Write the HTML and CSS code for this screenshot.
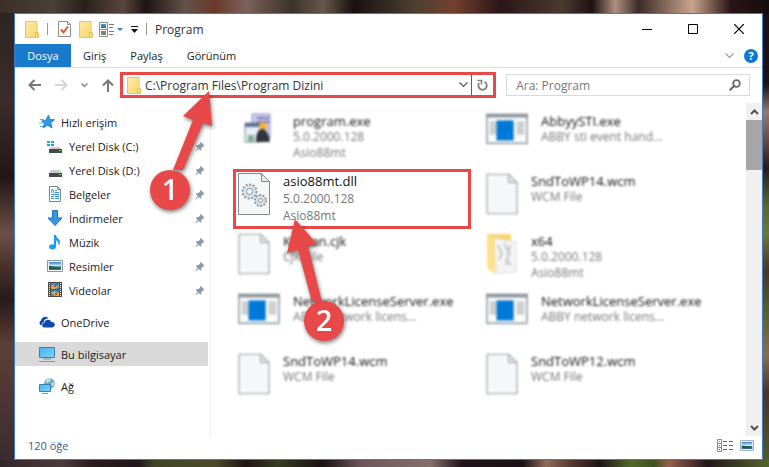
FILE: index.html
```html
<!DOCTYPE html>
<html lang="tr">
<head>
  <meta charset="UTF-8" />
  <title>Program</title>
  <meta name="viewport" content="width=device-width, initial-scale=1" />
  <link rel="stylesheet" href="styles.css">
</head>
<body>
  <!-- Shared icons -->
  <svg class="sprite" aria-hidden="true">
    <defs>
      <linearGradient id="gFolder" x1="0" y1="0" x2="1" y2="1">
        <stop offset="0" stop-color="#ffe9a6" /><stop offset="1" stop-color="#fbd66b" />
      </linearGradient>
      <linearGradient id="gScreen" x1="0" y1="0" x2="1" y2="1">
        <stop offset="0" stop-color="#3fb0f5" /><stop offset="1" stop-color="#7fd6ff" />
      </linearGradient>
      <linearGradient id="gSky" x1="0" y1="0" x2="0" y2="1">
        <stop offset="0" stop-color="#2f80d6" /><stop offset="0.5" stop-color="#d8f0fa" /><stop offset="0.6" stop-color="#2e6b62" /><stop offset="1" stop-color="#3778a8" />
      </linearGradient>
    </defs>
    <symbol id="folder" viewBox="0 0 14 17">
      <path d="M.5 .5h11.5v11.500h1.500v4.500H.5z" fill="url(#gFolder)" stroke="#e8c45c" />
      <path d="M10.500 16v-4.500h2.500V16" fill="#ffe9a6" stroke="#e3b941" />
    </symbol>
    <symbol id="pin" viewBox="0 0 12 12">
      <path d="M7 .5 11.500 5l-1 1-.7-.2-2.300 2.300.1 2-1 1L4.200 8.700.8 11.600l-.5-.4 3-3.500L1 5.300l1-1 2 .1L6.300 2.200 6 1.500z" fill="#8c9aa6" />
    </symbol>
    <symbol id="page" viewBox="0 0 34 44">
      <path d="M1 1h23l9 9v33H1z" fill="#f5f7f9" stroke="#9ba1a6" stroke-width="1.200" />
      <path d="M24 1v9h9z" fill="#dfe4e8" stroke="#9ba1a6" />
    </symbol>
    <symbol id="app" viewBox="0 0 44 32">
      <path d="M1 1h42v30H1z" fill="#fbfbfb" stroke="#a3adb3" stroke-width="2" />
      <path d="M0 0h44v4H0z" fill="#8d979d" />
      <path d="M4 8h7v14H4zM32 8h8v14h-8z" fill="#cfcfcf" />
      <path d="M11 7h18v21H11z" fill="#0078d7" />
    </symbol>
    <symbol id="picture" viewBox="0 0 16 12">
      <path d="M.5 .5h15v11H.5z" fill="#fff" stroke="#8b95a5" />
      <path d="M2 2h12v8H2z" fill="url(#gSky)" />
      <path d="M2 6c3 0 5 1 12 2.500V9H2z" fill="#29584d" />
    </symbol>
  </svg>

  <main class="window">
    <header class="title-bar">
      <svg class="ic-folder" width="14" height="17"><use href="#folder" /></svg>
      <span class="sep first"></span>
      <button class="quick" aria-label="Özellikler">
        <svg width="13" height="16" viewBox="0 0 13 16"><path d="M.5 .5h9l3 3v12H.5z" fill="#fff" stroke="#8a8f94" /><path d="M9.500 .5v3h3" fill="none" stroke="#8a8f94" /><path d="m3 8.500 2.500 3 4.500-6" fill="none" stroke="#e8541e" stroke-width="2" /></svg>
      </button>
      <button class="quick" aria-label="Yeni klasör">
        <svg width="14" height="17"><use href="#folder" /></svg>
      </button>
      <button class="quick layout" aria-label="Düzen">
        <svg width="24" height="15" viewBox="0 0 24 15"><path d="M.5 .5h8v14h-8zM.5 7.500h8" fill="#fff" stroke="#8a8f94" /><path d="M2 2h5v4H2z" fill="#3f8edb" /><path d="M2 4.500h5V6H2z" fill="#3c6b5b" /><path d="M2 9h5v4H2z" fill="#5b8fc9" /><path d="M2 9h3v2H2z" fill="#4da34d" /><path d="M4 11h2v2H4z" fill="#d4542c" /><path d="M10 2.500h5M10 5.500h4M10 9.500h5M10 12.500h4" stroke="#777" /><path d="M18 6h6l-3 3z" fill="#3f78b8" /></svg>
      </button>
      <button class="quick" aria-label="Özelleştir">
        <svg width="7" height="8" viewBox="0 0 7 8"><path d="M0 1.500h7" stroke="#111" /><path d="M0 4h7L3.500 8z" fill="#111" /></svg>
      </button>
      <span class="sep"></span>
      <h1>Program</h1>
      <div class="controls">
        <button aria-label="Simge durumuna küçült"><svg width="10" height="10"><path d="M0 5.500h10" stroke="#000" /></svg></button>
        <button aria-label="Ekranı kapla"><svg width="10" height="10"><path d="M.5 .5h9v9h-9z" fill="none" stroke="#000" /></svg></button>
        <button aria-label="Kapat"><svg width="10" height="10"><path d="m0 0 10 10M10 0 0 10" stroke="#000" stroke-width="1.200" /></svg></button>
      </div>
    </header>

    <nav class="tabs">
      <button class="tab active">Dosya</button>
      <button class="tab">Giriş</button>
      <button class="tab">Paylaş</button>
      <button class="tab">Görünüm</button>
      <div class="tab-tools">
        <button aria-label="Şeridi genişlet"><svg width="9" height="6"><path d="m.5 .5 4 4 4-4" fill="none" stroke="#9a9a9a" stroke-width="1.200" /></svg></button>
        <button class="help" aria-label="Yardım">?</button>
      </div>
    </nav>

    <div class="toolbar">
      <div class="nav-buttons">
        <button aria-label="Geri"><svg width="13" height="12"><path d="M13 6H1.500M6.500 1l-5 5 5 5" fill="none" stroke="#777" stroke-width="2" /></svg></button>
        <button aria-label="İleri"><svg width="13" height="12"><path d="M0 6h11.500M6.500 1l5 5-5 5" fill="none" stroke="#d6d6d6" stroke-width="2" /></svg></button>
        <button aria-label="Son konumlar"><svg width="7" height="5"><path d="m.5 .5 3 3 3-3" fill="none" stroke="#858585" stroke-width="1.500" /></svg></button>
        <button aria-label="Yukarı"><svg width="12" height="13"><path d="M6 13V1.500M1 6.500l5-5 5 5" fill="none" stroke="#777" stroke-width="2" /></svg></button>
      </div>
      <div class="address">
        <svg width="14" height="17"><use href="#folder" /></svg>
        <input type="text" id="path" aria-label="Adres" value="C:\Program Files\Program Dizini" />
        <button class="drop" aria-label="Önceki konumlar"><svg width="9" height="6"><path d="m.5 .5 4 4 4-4" fill="none" stroke="#555" stroke-width="1.200" /></svg></button>
        <button class="refresh" aria-label="Yenile"><svg width="11" height="12" viewBox="0 0 11 12"><path d="M7.500 2.800A4.200 4.200 0 1 1 2.200 4" fill="none" stroke="#808080" stroke-width="1.800" /><path d="M.5 1.500h4v4" fill="none" stroke="#808080" stroke-width="1.500" /></svg></button>
      </div>
      <div class="search">
        <input type="text" id="search" aria-label="Ara" placeholder="Ara: Program" />
        <svg width="12" height="12" viewBox="0 0 12 12"><circle cx="7.500" cy="4.500" r="3.300" fill="none" stroke="#666" stroke-width="1.800" /><path d="M5 7 .8 11.200" stroke="#666" stroke-width="2" /></svg>
      </div>
    </div>

    <div class="content">
      <aside class="sidebar">
        <a href="#" class="item root">
          <svg width="16" height="16" viewBox="0 0 16 16"><path d="m9.500 1 1.300 4.600 4.700.1-3.700 3 1.200 5.300-4.300-2.800L4 14l1.500-4.700L2.500 7l4-.6z" fill="#2f9ae8" stroke="#1476c4" stroke-width=".8" /><path d="M1 5.500h4M0 9h4M1 12.500h3" stroke="#58b4f0" /></svg>
          <span>Hızlı erişim</span>
        </a>
        <a href="#" class="item">
          <svg width="16" height="16" viewBox="0 0 16 16"><path d="M0 3h3v2H0zM4 3h3v2H4zM0 6h3v2H0zM4 6h3v2H4z" fill="#17a7f0" /><path d="M4 9h9l2 3H2z" fill="#c9cdd0" /><path d="M2 11h13v4H2z" fill="#44484b" /><path d="M12 12h2v1h-2z" fill="#6ee26e" /></svg>
          <span>Yerel Disk (C:)</span><svg class="pin" width="10" height="11"><use href="#pin" /></svg>
        </a>
        <a href="#" class="item">
          <svg width="16" height="16" viewBox="0 0 16 16"><path d="M4 8h9l2 3H2z" fill="#c9cdd0" /><path d="M2 11h13v4H2z" fill="#44484b" /><path d="M12 12h2v1h-2z" fill="#6ee26e" /></svg>
          <span>Yerel Disk (D:)</span><svg class="pin" width="10" height="11"><use href="#pin" /></svg>
        </a>
        <a href="#" class="item">
          <svg width="16" height="16" viewBox="0 0 16 16"><path d="M2.500 .5h8l3 3v12h-11z" fill="#fff" stroke="#7f858a" /><path d="M10.500 .5v3h3" fill="none" stroke="#7f858a" /><path d="m4 7 1.500-4L7 7M8 4.500h2M8 6.500h4M4 8.500h8M4 10.500h3M4 12.500h3M8 10.500h4M8 12.500h4" fill="none" stroke="#2f8fd8" /></svg>
          <span>Belgeler</span><svg class="pin" width="10" height="11"><use href="#pin" /></svg>
        </a>
        <a href="#" class="item">
          <svg width="16" height="16" viewBox="0 0 16 16"><path d="M5.500 .5h5v7.500h4.500L8 15.500 1 8h4.500z" fill="#3b94e0" stroke="#1f70b8" /></svg>
          <span>İndirmeler</span><svg class="pin" width="10" height="11"><use href="#pin" /></svg>
        </a>
        <a href="#" class="item">
          <svg width="16" height="16" viewBox="0 0 16 16"><ellipse cx="5.500" cy="12.800" rx="3.400" ry="2.600" fill="#1a9bf0" /><path d="M7 1h2c0 3 4 4 4 7 0 1.500-.5 2.500-1.500 3.500C12 8.500 10.500 7 9 6.500V13H7z" fill="#1a9bf0" /></svg>
          <span>Müzik</span><svg class="pin" width="10" height="11"><use href="#pin" /></svg>
        </a>
        <a href="#" class="item">
          <svg width="16" height="12"><use href="#picture" /></svg>
          <span>Resimler</span><svg class="pin" width="10" height="11"><use href="#pin" /></svg>
        </a>
        <a href="#" class="item">
          <svg width="16" height="16" viewBox="0 0 16 16"><path d="M1 0h14v15H1z" fill="#4b4b4b" /><path d="M4 1h8v6H4z" fill="#3d7fd0" /><path d="M4 8h8v6H4z" fill="#3d7fd0" /><path d="m4 4 3-2 2 3 3-2v2l-4 2H4zM4 11l4-2 2 2 2-1v4H8z" fill="#e0b030" /><path d="M7 3h2v2H7zM8 11h2v2H8z" fill="#d04030" /><path d="M2.500 1v14M13.500 1v14" stroke="#fff" stroke-dasharray="1 1" /></svg>
          <span>Videolar</span><svg class="pin" width="10" height="11"><use href="#pin" /></svg>
        </a>
        <a href="#" class="item root group">
          <svg width="16" height="12" viewBox="0 0 16 12"><path d="M2.500 9.500A2.600 2.600 0 0 1 2 4.600 4.200 4.200 0 0 1 9.500 2.500c-3 0-4.500 1.500-4.500 3.500-1.500.5-2.500 1.500-2.500 3.500z" fill="#0f4bac" /><path d="M5 11.500a2.500 2.500 0 0 1 .5-4.900A3.600 3.600 0 0 1 12.400 6a2.800 2.800 0 0 1 1.100 5.500z" fill="#0f4bac" /></svg>
          <span>OneDrive</span>
        </a>
        <a href="#" class="item root group selected">
          <svg width="16" height="16" viewBox="0 0 16 16"><path d="M.5 1.500h15v10H.5z" fill="url(#gScreen)" stroke="#3c7fa8" /><path d="M4 13h8" stroke="#7d98a8" /><path d="M0 15.500h16" stroke="#6d9dbb" /></svg>
          <span>Bu bilgisayar</span>
        </a>
        <a href="#" class="item root group">
          <svg width="16" height="16" viewBox="0 0 16 16"><circle cx="10.500" cy="5.500" r="5.300" fill="#5fa9c4" /><path d="M7 2c2-2 5-1 5 0s-1 2-2 2-1 2-3 1zM12 5l3-1c.5 2 0 4-2 5z" fill="#b9dbe0" /><path d="M.5 6.500h11v7H.5z" fill="url(#gScreen)" stroke="#3c7fa8" /><path d="M3 15.500h6" stroke="#7d98a8" /></svg>
          <span>Ağ</span>
        </a>
      </aside>

      <ul class="files">
        <li class="tile blurred">
          <svg width="42" height="32" viewBox="0 0 42 32"><path d="M14 1h18v24H14z" fill="#c9c8ec" stroke="#8e90c8" /><path d="M19 5h12M19 9h12" stroke="#7779b8" stroke-width="2" /><path d="M7 10h16v19H7z" fill="#e8eef4" stroke="#7d8794" /><path d="M7 10h16v4H7z" fill="#5d7296" /><circle cx="25" cy="13" r="4" fill="#f0b43c" /><path d="M18 29c0-10 3-13 6-13s7 4 8 13z" fill="#30343c" /><path d="M10 22h6v7h-6z" fill="#7eaf9a" /></svg>
          <div class="info"><h2>program.exe</h2><p>5.0.2000.128</p><p>Asio88mt</p></div>
        </li>
        <li class="tile blurred">
          <svg width="42" height="32"><use href="#app" /></svg>
          <div class="info"><h2>AbbyySTI.exe</h2><p>ABBY sti event hand...</p></div>
        </li>
        <li class="tile marked">
          <svg width="32" height="42" viewBox="0 0 32 42">
            <path d="M.5 .5h23l8 8v33H.5z" fill="#f5f7f9" stroke="#85898c" />
            <path d="M23.500 .5v8h8z" fill="#e6eaed" stroke="#85898c" />
            <g fill="#d7e0e7" stroke="#8b9aa5">
              <circle cx="11.500" cy="18.500" r="7" stroke-width="2" stroke-dasharray="2 1.600" />
              <circle cx="11.500" cy="18.500" r="6" stroke="none" />
              <circle cx="11.500" cy="18.500" r="3" fill="#f5f7f9" />
              <circle cx="22.500" cy="27.500" r="5.500" stroke-width="2" stroke-dasharray="2 1.400" />
              <circle cx="22.500" cy="27.500" r="4.600" stroke="none" />
              <circle cx="22.500" cy="27.500" r="2" fill="#f5f7f9" />
            </g>
          </svg>
          <div class="info"><h2>asio88mt.dll</h2><p>5.0.2000.128</p><p>Asio88mt</p></div>
        </li>
        <li class="tile blurred">
          <svg width="32" height="42"><use href="#page" /></svg>
          <div class="info"><h2>SndToWP14.wcm</h2><p>WCM File</p></div>
        </li>
        <li class="tile blurred">
          <svg width="32" height="42"><use href="#page" /></svg>
          <div class="info"><h2>Korean.cjk</h2><p>CJK File</p></div>
        </li>
        <li class="tile blurred">
          <svg width="32" height="42" viewBox="0 0 32 42"><path d="M1 1h24v34H1z" fill="#fbd66b" /><path d="m8 5 22 4v30l-20 2z" fill="#f4f4f2" stroke="#ddd" /><path d="m12 12 4 9-3 6M18 10l6 12M20 26l5 6M24 12l-4 20" fill="none" stroke="#c4cacc" stroke-width="2" /><path d="m1 1 8 6v34l-8-6z" fill="#ffe08a" /></svg>
          <div class="info"><h2>x64</h2><p>5.0.2000.128</p><p>Asio88mt</p></div>
        </li>
        <li class="tile blurred">
          <svg width="42" height="32"><use href="#app" /></svg>
          <div class="info"><h2>NetworkLicenseServer.exe</h2><p>ABBY network licens...</p></div>
        </li>
        <li class="tile blurred">
          <svg width="42" height="32"><use href="#app" /></svg>
          <div class="info"><h2>NetworkLicenseServer.exe</h2><p>ABBY network licens...</p></div>
        </li>
        <li class="tile blurred">
          <svg width="32" height="42"><use href="#page" /></svg>
          <div class="info"><h2>SndToWP14.wcm</h2><p>WCM File</p></div>
        </li>
        <li class="tile blurred">
          <svg width="32" height="42"><use href="#page" /></svg>
          <div class="info"><h2>SndToWP12.wcm</h2><p>WCM File</p></div>
        </li>
      </ul>

      <div class="scrollbar">
        <button aria-label="Yukarı kaydır"><svg width="9" height="6"><path d="m1 5 3.500-3.500L8 5" fill="none" stroke="#505050" stroke-width="2" /></svg></button>
        <div class="thumb"></div>
        <button class="down" aria-label="Aşağı kaydır"><svg width="9" height="6"><path d="m1 1 3.500 3.500L8 1" fill="none" stroke="#505050" stroke-width="2" /></svg></button>
      </div>
    </div>

    <footer class="status">
      <span>120 öğe</span>
      <div class="views">
        <button aria-label="Ayrıntılar"><svg width="16" height="13"><path d="M.5 .5h4v12h-4zM.5 4.500h4M.5 8.500h4" fill="#fff" stroke="#8a8a8a" /><path d="M2 2h1v1H2z" fill="#3a8" /><path d="M2 6h1v1H2z" fill="#36c" /><path d="M2 10h1v1H2z" fill="#d03" /><path d="M6 2.500h10M6 6.500h10M6 10.500h10" stroke="#666" stroke-dasharray="4 2" /></svg></button>
        <button aria-label="Büyük simgeler"><svg width="14" height="11"><use href="#picture" /></svg></button>
      </div>
    </footer>
  </main>

  <!-- Step markers lying over the window -->
  <svg class="marker one" width="64" height="124" viewBox="0 0 64 124">
    <path d="M60 2 34 27l10 4-20 50h10L54 34l9 3z" />
    <circle cx="21" cy="101" r="20" />
    <text x="21" y="111">1</text>
  </svg>
  <svg class="marker two" width="60" height="126" viewBox="0 0 60 126">
    <path d="M10 2 2 36l11-3 14 52h10L23 29l9-2z" />
    <circle cx="39" cy="104" r="20" />
    <text x="39" y="114">2</text>
  </svg>
</body>
</html>
```

FILE: styles.css
```css
:root {
  --frame: #3f7bc8;
  --accent: #1979ca;
  --mark: #e84848;
  --line: #dadbdc;
  --text: #1a1a1a;
  --muted: #777;
}

* { box-sizing: border-box; }

body {
  position: relative;
  display: flex;
  min-height: 100vh;
  margin: 0;
  padding: 13px 6px 7px 14px;
  font-family: "Open Sans", "Noto Sans", sans-serif;
  font-size: 11px;
  color: var(--text);
  background:
    linear-gradient(90deg, #3c3028 0, #4a4038 7%, #2a1f1c 11%, #5a463d 16%, #1d1414 19%, #62514a 24%, #6a3a2c 28%, #7a625a 32%, #3b3228 38%, #66594a 42%, #1a1010 46%, #4c4030 54%, #74402f 59%, #2a1618 65%, #4a3a30 73%, #1e1212 77%, #b09080 80%, #3a2b28 83%, #c9a48c 90%, #2a1518 95%, #150c0c 100%) top / 100% 13px no-repeat,
    linear-gradient(90deg, #33262a 0, #4a3a3c 8%, #2a1c1e 12%, #20161a 18%, #3f4426 20%, #4a4a2a 28%, #201414 32%, #363c22 36%, #1c1214 42%, #6c565a 47%, #86706c 56%, #20141a 60%, #1c1214 68%, #8c6c5c 71%, #5c3c34 74%, #1c1416 78%, #52682a 82%, #3f5020 85%, #94604c 87%, #22161a 92%, #54642c 100%) bottom / 100% 7px no-repeat,
    linear-gradient(180deg, #1a0f10 0, #1c1012 18%, #9a7868 24%, #6c4a44 30%, #2a1a1a 36%, #55682c 44%, #6c7838 50%, #4a3426 58%, #54602c 66%, #8c6c50 76%, #4a3428 84%, #525c2c 100%) right / 6px 100% no-repeat,
    linear-gradient(180deg, #2c2420 0, #3c2c28 22%, #221614 38%, #6c5048 50%, #4c362e 56%, #281a18 64%, #5c4038 74%, #382a2c 100%);
}

button {
  display: flex;
  align-items: center;
  justify-content: center;
  padding: 0;
  border: 0;
  background: none;
  color: inherit;
  font: inherit;
}

h1, h2, p, ul {
  margin: 0;
  padding: 0;
  font-weight: normal;
}

svg { flex: none; }

.sprite {
  position: absolute;
  width: 0;
  height: 0;
}

.window {
  flex: 1;
  display: flex;
  flex-direction: column;
  border: 1px solid var(--frame);
  background: #fff;
}

/* Title bar */
.title-bar {
  display: flex;
  align-items: center;
  gap: 8px;
  height: 30px;
  padding-left: 10px;
}

.title-bar h1 {
  flex: 1;
  font-size: 12px;
  color: #333;
}

.sep {
  width: 1px;
  height: 12px;
  background: #999;
}

.sep.first { margin-right: 2px; }

.quick.layout { margin-left: -2px; }

.controls {
  display: flex;
  align-self: stretch;
}

.controls button { width: 46px; }

/* Ribbon tabs */
.tabs {
  display: flex;
  height: 24px;
  border-bottom: 1px solid var(--line);
}

.tab {
  padding: 0 12px;
  white-space: nowrap;
}

.tab.active {
  width: 56px;
  background: var(--accent);
  color: #fff;
}

.tab-tools {
  display: flex;
  align-items: center;
  gap: 10px;
  margin-left: auto;
  padding-right: 4px;
}

.help {
  width: 14px;
  height: 14px;
  border-radius: 50%;
  background: #0c78d6;
  color: #fff;
  font-weight: bold;
}

/* Navigation and address */
.toolbar {
  display: flex;
  align-items: flex-start;
  gap: 10px;
  padding: 4px 12px 5px 0;
}

.nav-buttons {
  display: flex;
  align-items: center;
  justify-content: space-between;
  width: 105px;
  height: 26px;
  margin-right: -10px;
  padding: 0 6px 0 13px;
}

.address {
  flex: 8;
  display: flex;
  align-items: center;
  height: 26px;
  padding-left: 4px;
  border: 3px solid var(--mark);
}

.toolbar input {
  flex: 1;
  min-width: 0;
  padding: 0 4px;
  border: 0;
  outline: 0;
  background: none;
  font-family: inherit;
  font-size: 12px;
  color: #333;
}

.drop {
  width: 17px;
  height: 20px;
  border-right: 1px solid #0078d7;
}

.refresh { width: 21px; }

.search {
  flex: 5;
  display: flex;
  align-items: center;
  height: 22px;
  margin-top: 2px;
  padding: 0 8px 0 5px;
  border: 1px solid #d9d9d9;
}

.search input::placeholder {
  color: #777;
  opacity: 1;
}

/* Sidebar */
.content {
  flex: 1;
  display: flex;
}

.sidebar {
  width: 196px;
  padding: 7px 2px 0 0;
  border-right: 1px solid #f0f0f0;
}

.item {
  display: flex;
  align-items: center;
  gap: 6px;
  height: 24px;
  padding: 0 3px 0 32px;
  color: var(--text);
  text-decoration: none;
}

.item.root { padding-left: 24px; }
.item.group { margin-top: 8px; }
.item.selected { background: #d9d9d9; }

.pin { margin-left: auto; }

/* File tiles */
.files {
  flex: 1;
  display: grid;
  grid-template-columns: 1fr 1fr;
  grid-auto-rows: 60px;
  column-gap: 10px;
  padding: 6px 27px 0 22px;
  list-style: none;
}

.tile {
  display: flex;
  align-items: flex-start;
  gap: 13px;
  padding: 1px 2px;
  border: 3px solid transparent;
}

.tile.blurred { filter: blur(1px); }

.tile.marked { border-color: var(--mark); }

.info {
  font-size: 12px;
  line-height: 16px;
  white-space: nowrap;
}

.marked .info { line-height: 17px; }

.info h2 {
  font-size: 13px;
  color: #111;
}

.info p { color: var(--muted); }

/* Scroll bar */
.scrollbar {
  display: flex;
  flex-direction: column;
  width: 16px;
  background: #f0f0f0;
}

.scrollbar button { height: 17px; }
.scrollbar .down { margin-top: auto; }

.thumb {
  height: 50px;
  background: #a6a6a6;
}

/* Status bar */
.status {
  display: flex;
  align-items: center;
  justify-content: space-between;
  height: 23px;
  padding: 0 8px 5px 13px;
  color: #44597a;
}

.views {
  display: flex;
  gap: 7px;
}

/* Step markers */
.marker {
  position: absolute;
  overflow: visible;
  fill: var(--mark);
  filter: drop-shadow(1px 2px 2px rgba(0, 0, 0, 0.5));
}

.marker text {
  fill: #fff;
  font-size: 29px;
  font-weight: 600;
  text-anchor: middle;
}

.one {
  left: 149px;
  top: 89px;
}

.two {
  left: 285px;
  top: 217px;
}
```
